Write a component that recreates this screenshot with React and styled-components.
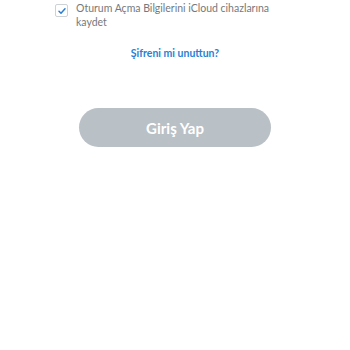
import React from "react";
import styled, { createGlobalStyle } from "styled-components";

const Global = createGlobalStyle`
  html, body { margin: 0; padding: 0; background: #fff; }
  body { font-family: "Lato", "Open Sans", sans-serif; }
`;

const Page = styled.div`
  width: 350px;
  height: 350px;
  display: flex;
  flex-direction: column;
  align-items: center;
  box-sizing: border-box;
  padding-top: 2px;
`;

const CheckRow = styled.label`
  align-self: flex-start;
  display: flex;
  align-items: flex-start;
  gap: 8px;
  width: 224px;
  margin-left: 55px;
`;

const Box = styled.span`
  flex: none;
  box-sizing: border-box;
  width: 13px;
  height: 13px;
  margin-top: 2px;
  border: 1px solid #cdd2d7;
  border-radius: 2px;
  display: flex;
  align-items: center;
  justify-content: center;
  background: #fff;
`;

const CheckText = styled.span`
  font-size: 10.5px;
  line-height: 13.5px;
  color: #76797c;
`;

const Link = styled.a`
  margin-top: 18px;
  font-size: 10.5px;
  font-weight: 700;
  color: #2a7fd4;
  text-decoration: none;
`;

const Button = styled.button`
  margin-top: 49px;
  width: 192px;
  height: 39px;
  border: none;
  border-radius: 20px;
  background: #b9c0c6;
  color: #fff;
  font-family: "Lato", sans-serif;
  font-size: 15px;
  font-weight: 700;
`;

export default function App() {
  return (
    <>
      <Global />
      <Page>
        <CheckRow>
          <Box>
            <svg width="10" height="10" viewBox="0 0 10 10">
              <path d="M2 5.2 L4 7.2 L8 2.8" fill="none" stroke="#2a7fd4" strokeWidth="1.5" strokeLinecap="round" strokeLinejoin="round" />
            </svg>
          </Box>
          <CheckText>Oturum Açma Bilgilerini iCloud cihazlarına kaydet</CheckText>
        </CheckRow>
        <Link href="#">Şifreni mi unuttun?</Link>
        <Button>Giriş Yap</Button>
      </Page>
    </>
  );
}
